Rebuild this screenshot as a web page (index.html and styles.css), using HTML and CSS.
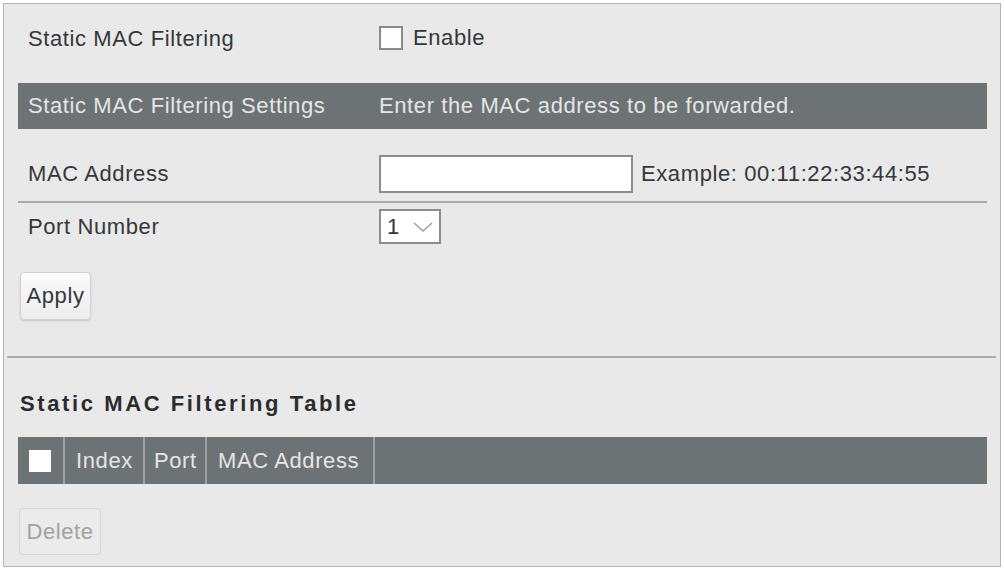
FILE: index.html
```html
<!DOCTYPE html>
<html lang="en">
<head>
    <meta charset="UTF-8">
    <meta name="viewport" content="width=device-width, initial-scale=1.0">
    <title>Static MAC Filtering</title>
    <link rel="stylesheet" href="styles.css">
</head>
<body>
    <div class="panel">
        <div class="row enable-row">
            <div class="label">Static MAC Filtering</div>
            <label class="field check-field">
                <input type="checkbox" id="enableFilter" class="check">
                <span>Enable</span>
            </label>
        </div>

        <div class="bar">
            <div class="label">Static MAC Filtering Settings</div>
            <div class="field">Enter the MAC address to be forwarded.</div>
        </div>

        <form id="filterForm">
            <div class="row mac-row">
                <div class="label">MAC Address</div>
                <div class="field">
                    <input type="text" id="macAddress" class="text-input">
                    <span class="hint">Example: 00:11:22:33:44:55</span>
                </div>
            </div>
            <div class="row port-row">
                <div class="label">Port Number</div>
                <div class="field">
                    <div class="select-box">
                        <select id="portNumber">
                            <option>1</option>
                            <option>2</option>
                            <option>3</option>
                            <option>4</option>
                        </select>
                        <svg width="20" height="10" viewBox="0 0 20 10">
                            <path d="M1 1 L10 9 L19 1" fill="none" stroke="#9a9ea2" stroke-width="1.5"/>
                        </svg>
                    </div>
                </div>
            </div>
            <button type="submit" class="btn apply-btn">Apply</button>
        </form>

        <hr class="divider">

        <h2 class="table-title">Static MAC Filtering Table</h2>
        <table class="mac-table">
            <thead>
                <tr>
                    <th class="col-check"><span class="head-check"></span></th>
                    <th class="col-index">Index</th>
                    <th class="col-port">Port</th>
                    <th class="col-mac">MAC Address</th>
                    <th></th>
                </tr>
            </thead>
            <tbody id="macRows"></tbody>
        </table>
        <button type="button" class="btn delete-btn" disabled>Delete</button>
    </div>
    <script>
        const filterForm = document.getElementById('filterForm');
        filterForm.addEventListener('submit', function(e) {
            e.preventDefault();
        });
    </script>
</body>
</html>
```

FILE: styles.css
```css
body {
    margin: 0;
    background-color: #ffffff;
    font-family: "Liberation Sans", Arial, sans-serif;
    font-size: 22px;
    letter-spacing: 0.6px;
    color: #353739;
}
.panel {
    margin: 3px 3px 0 3px;
    height: 550px;
    padding: 0 13px 12px 14px;
    background-color: #e9e9e9;
    border: 1px solid #b4b4b4;
}
.row, .bar {
    display: grid;
    grid-template-columns: 361px 1fr;
    align-items: center;
}
.label {
    padding-left: 10px;
}
.enable-row {
    margin-top: 11px;
    height: 48px;
}
.check-field {
    display: flex;
    align-items: center;
    gap: 10px;
    margin-top: -2px;
}
.check {
    appearance: none;
    margin: 0;
    width: 24px;
    height: 24px;
    background-color: #ffffff;
    border: 2px solid #8a8a8a;
    box-sizing: border-box;
}
.bar {
    margin-top: 20px;
    height: 46px;
    background-color: #6d7275;
    color: #e4e6e6;
}
.mac-row {
    padding: 26px 0 8px;
    border-bottom: 2px solid #a7a9aa;
}
.mac-row .field {
    display: flex;
    align-items: center;
    gap: 8px;
}
.text-input {
    width: 254px;
    height: 38px;
    margin: 0;
    box-sizing: border-box;
    border: 2px solid #8c8c8c;
    background-color: #ffffff;
}
.port-row {
    padding-top: 6px;
}
.select-box {
    display: inline-flex;
    align-items: center;
    gap: 2px;
    width: 62px;
    height: 35px;
    box-sizing: border-box;
    border: 2px solid #8c8c8c;
    background-color: #ffffff;
}
.select-box select {
    appearance: none;
    border: none;
    background: transparent;
    font-family: inherit;
    font-size: 22px;
    color: #353739;
    width: 30px;
    padding: 0 0 0 6px;
}
.btn {
    font-family: inherit;
    font-size: 22px;
    letter-spacing: 0.6px;
    border-radius: 4px;
    cursor: pointer;
}
.apply-btn {
    display: block;
    margin: 28px 0 0 2px;
    width: 71px;
    height: 48px;
    padding: 0;
    color: #353739;
    background: linear-gradient(#fbfbfb, #ececec);
    border: 1px solid #d2d2d2;
    box-shadow: 0 1px 2px rgba(0, 0, 0, 0.15);
}
.divider {
    margin: 36px -9px 0 -11px;
    border: none;
    border-top: 2px solid #a9abab;
}
.table-title {
    margin: 31px 0 0 2px;
    height: 30px;
    line-height: 30px;
    font-size: 22px;
    letter-spacing: 2.6px;
    color: #2b2c2e;
}
.mac-table {
    margin-top: 18px;
    width: 100%;
    border-collapse: collapse;
    background-color: #6d7275;
    color: #e4e6e6;
}
.mac-table th {
    height: 47px;
    padding: 0 0 0 11px;
    text-align: left;
    font-weight: normal;
    border-left: 2px solid #9b9fa1;
}
.mac-table th:first-child {
    border-left: none;
}
.mac-table .col-check {
    width: 34px;
}
.mac-table .col-index {
    width: 67px;
}
.mac-table .col-port {
    width: 51px;
    padding-left: 9px;
}
.mac-table .col-mac {
    width: 155px;
}
.head-check {
    display: block;
    width: 22px;
    height: 22px;
    background-color: #ffffff;
}
.delete-btn {
    display: block;
    margin: 24px 0 0 1px;
    width: 82px;
    height: 47px;
    padding: 0;
    color: #a2a2a2;
    background-color: #ebebeb;
    border: 1px solid #d6d6d6;
}
```
